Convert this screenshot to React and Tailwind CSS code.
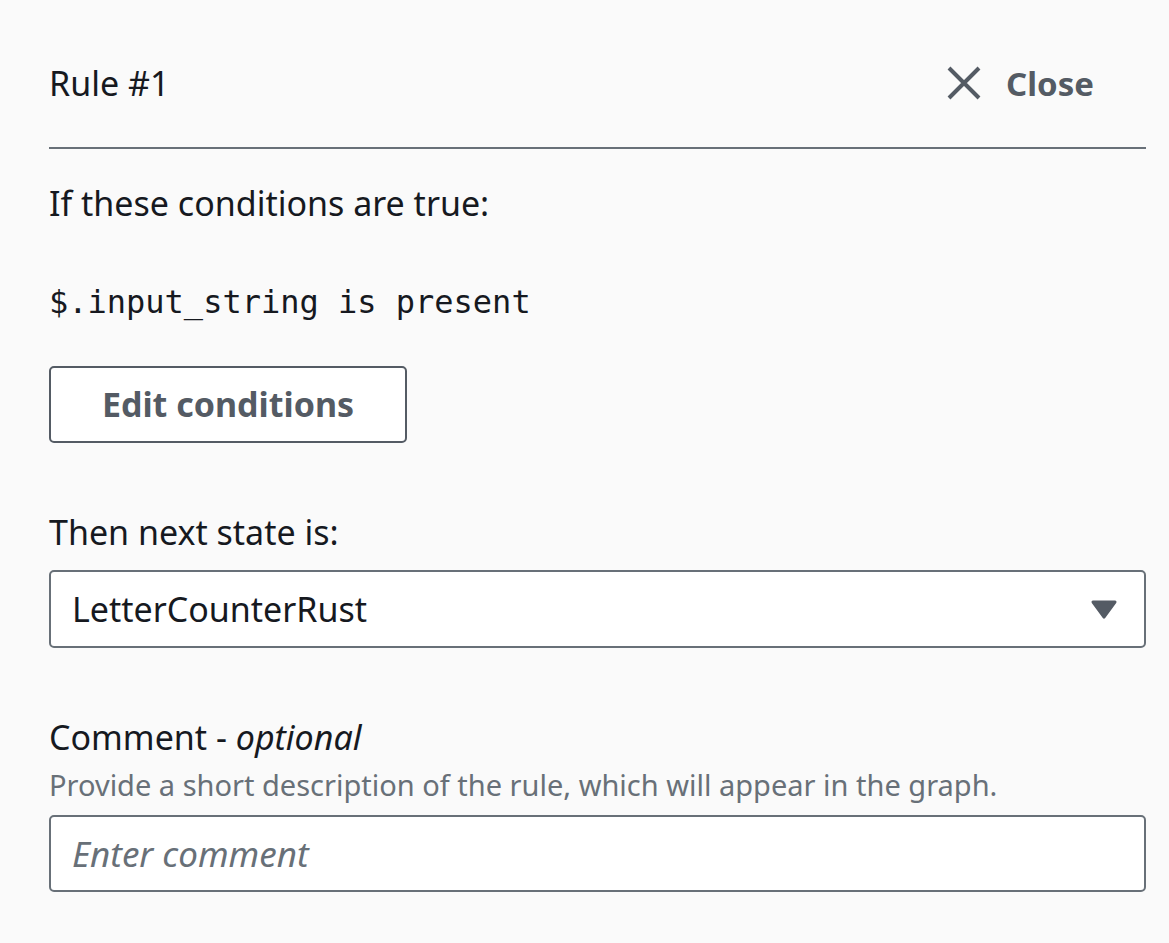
import React from 'react';

// Panel editing a single Choice rule
export default function App() {
  return (
    <div
      className="min-h-[943px] w-full bg-[#fafafa] pl-[49px] pr-[23px] text-[#16191f]"
      style={{ fontFamily: '"Noto Sans", "Open Sans", sans-serif' }}
    >
      {/* Header */}
      <div className="flex h-[149px] items-center justify-between border-b-2 border-[#687078] pt-[19px]">
        <h2 className="text-[34px] font-normal leading-none">Rule #1</h2>
        <button className="mr-[52px] flex items-center gap-[25px] text-[33px] font-bold text-[#545b64]">
          <svg width="34" height="34" viewBox="0 0 34 34" fill="none">
            <path d="M2 2L32 32M32 2L2 32" stroke="#545b64" strokeWidth="4" />
          </svg>
          <span className="leading-none">Close</span>
        </button>
      </div>

      <p className="mt-[30px] text-[34px] leading-[48px]">If these conditions are true:</p>

      <p
        className="mt-[51px] text-[32px] leading-[48px]"
        style={{ fontFamily: '"DejaVu Sans Mono", "Liberation Mono", monospace' }}
      >
        $.input_string is present
      </p>

      <button className="mt-[40px] flex h-[77px] w-[358px] items-center justify-center rounded-[5px] border-2 border-[#545b64] bg-white text-[34px] font-bold text-[#545b64]">
        Edit conditions
      </button>

      <p className="mt-[65px] text-[34px] leading-[48px]">Then next state is:</p>

      <div className="mt-[14px] flex h-[78px] items-center justify-between rounded-[5px] border-2 border-[#687078] bg-white pl-[21px] pr-[27px]">
        <span className="text-[34px]">LetterCounterRust</span>
        <svg width="26" height="21" viewBox="0 0 26 21">
          <path d="M2 1.5H24a1.5 1.5 0 0 1 1.2 2.4L14.2 19a1.5 1.5 0 0 1-2.4 0L0.8 3.9A1.5 1.5 0 0 1 2 1.5Z" fill="#545b64" />
        </svg>
      </div>

      <p className="mt-[65px] text-[34px] leading-[48px]">
        Comment - <i>optional</i>
      </p>
      <p className="mt-[4px] text-[29px] leading-[40px] text-[#687078]">
        Provide a short description of the rule, which will appear in the graph.
      </p>
      <input
        className="mt-[10px] block h-[77px] w-full rounded-[5px] border-2 border-[#687078] bg-white px-[21px] text-[35px] italic text-[#16191f] outline-none placeholder:text-[#687078]"
        placeholder="Enter comment"
      />
    </div>
  );
}
